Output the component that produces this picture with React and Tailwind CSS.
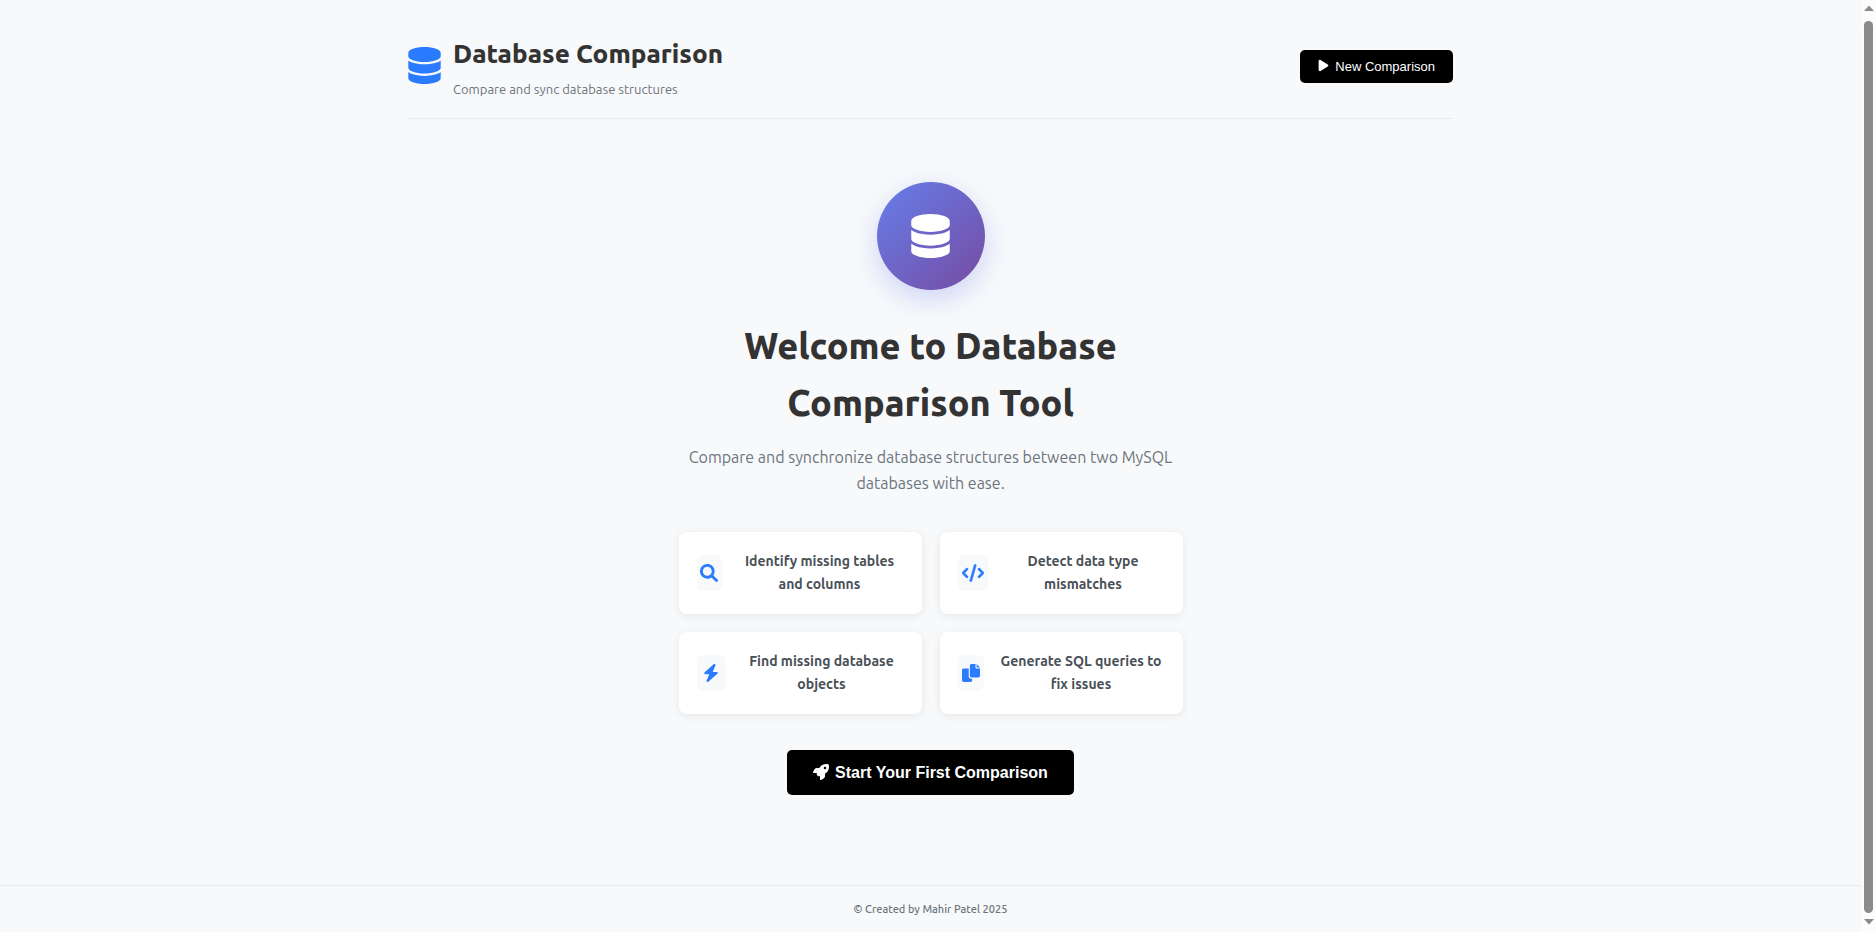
import React from "react";
import { FaDatabase, FaPlay, FaRocket } from "react-icons/fa6";

function BoltIcon({ className }) {
  return (
    <svg viewBox="0 0 384 512" fill="currentColor" aria-hidden="true" className={className}>
      <path d="M240.5 224H352C365.3 224 377.3 232.3 381.1 244.7C386.6 257.2 383.1 271.3 373.1 280.1L117.1 504.1C105.8 513.9 89.27 514.7 77.19 505.9C65.1 497.1 60.7 481.1 66.59 467.4L143.5 288H31.1C18.67 288 6.733 279.7 2.044 267.3C-2.645 254.8 .8944 240.7 10.93 231.9L266.9 7.918C278.2-1.92 294.7-2.669 306.8 6.114C318.9 14.9 323.3 30.87 317.4 44.61L240.5 224z" />
    </svg>
  );
}

function SearchIcon({ className }) {
  return (
    <svg viewBox="0 0 512 512" fill="currentColor" aria-hidden="true" className={className}>
      <path d="M500.3 443.7l-119.7-119.7c27.22-40.41 40.65-90.9 33.46-144.7C401.8 87.79 326.8 13.32 235.2 1.723C99.01-15.51-15.51 99.01 1.724 235.2c11.6 91.64 86.08 166.7 177.6 178.9c53.8 7.189 104.3-6.236 144.7-33.46l119.7 119.7c15.62 15.62 40.95 15.62 56.57 0C515.9 484.7 515.9 459.3 500.3 443.7zM79.1 208c0-70.58 57.42-128 128-128s128 57.42 128 128c0 70.58-57.42 128-128 128S79.1 278.6 79.1 208z" />
    </svg>
  );
}

function CodeIcon({ className }) {
  return (
    <svg viewBox="0 0 640 512" fill="currentColor" stroke="currentColor" strokeWidth="14" aria-hidden="true" className={className}>
      <path d="M414.8 40.79L286.8 488.8C281.9 505.8 264.2 515.6 247.2 510.8C230.2 505.9 220.4 488.2 225.2 471.2L353.2 23.21C358.1 6.216 375.8-3.624 392.8 1.232C409.8 6.087 419.6 23.8 414.8 40.79zM518.6 121.4L630.6 233.4C643.1 245.9 643.1 266.1 630.6 278.6L518.6 390.6C506.1 403.1 485.9 403.1 473.4 390.6C460.9 378.1 460.9 357.9 473.4 345.4L562.7 256L473.4 166.6C460.9 154.1 460.9 133.9 473.4 121.4C485.9 108.9 506.1 108.9 518.6 121.4zM166.6 166.6L77.25 256L166.6 345.4C179.1 357.9 179.1 378.1 166.6 390.6C154.1 403.1 133.9 403.1 121.4 390.6L9.372 278.6C-3.124 266.1-3.124 245.9 9.372 233.4L121.4 121.4C133.9 108.9 154.1 108.9 166.6 121.4C179.1 133.9 179.1 154.1 166.6 166.6z" />
    </svg>
  );
}

function CopyIcon({ className }) {
  return (
    <svg viewBox="0 0 512 512" fill="currentColor" aria-hidden="true" className={className}>
      <path d="M384 96L384 0h-112c-26.51 0-48 21.49-48 48v288c0 26.51 21.49 48 48 48H464c26.51 0 48-21.49 48-48V128h-95.1C398.4 128 384 113.6 384 96zM416 0v96h96L416 0zM192 352V128h-144c-26.51 0-48 21.49-48 48v288c0 26.51 21.49 48 48 48h192c26.51 0 48-21.49 48-48L288 416h-32C220.7 416 192 387.3 192 352z" />
    </svg>
  );
}

const features = [
  { Icon: SearchIcon, text: "Identify missing tables and columns", tile: "w-[25px]", icon: "h-[18px] w-[18px]", label: "max-w-40" },
  { Icon: CodeIcon, text: "Detect data type mismatches", tile: "w-[30px]", icon: "h-[18px] w-[22px]", label: "max-w-32" },
  { Icon: BoltIcon, text: "Find missing database objects", tile: "w-[29px]", icon: "h-[18px] w-[14px]", label: "max-w-40" },
  { Icon: CopyIcon, text: "Generate SQL queries to fix issues", tile: "w-[26px]", icon: "h-[18px] w-[18px]", label: "max-w-44" },
];

function FeatureCard({ Icon, text, tile, icon, label }) {
  return (
    <li className="flex items-center gap-3.5 rounded-lg bg-white p-[18px] shadow-[0_2px_9px_rgba(0,0,0,0.08)]">
      <span className={"flex h-9 shrink-0 items-center justify-center rounded-md bg-[#f8f9fb] text-[#2a7bff] " + tile}>
        <Icon className={icon} />
      </span>
      <span className="flex flex-1 justify-center">
        <span className={"text-center text-sm leading-[23px] font-semibold text-[#495057] " + label}>{text}</span>
      </span>
    </li>
  );
}

export default function App() {
  return (
    <div className="flex h-screen bg-[#f8f9fb] font-['Ubuntu','Noto_Sans',sans-serif] text-[#333]">
      <div className="flex min-w-0 flex-1 flex-col overflow-hidden">
        <div className="mx-auto w-full max-w-[1081px] flex-1 px-[18px]">
          <header className="flex items-start justify-between border-b border-[#e9ecef] pt-9 pb-[19px]">
            <div className="flex items-start gap-3">
              <FaDatabase className="mt-[11px] h-[37px] w-[33px] text-[#2a7bff]" />
              <div className="flex flex-col gap-[7px]">
                <h1 className="text-[26px] leading-9 font-extrabold">Database Comparison</h1>
                <p className="text-[13px] leading-5 font-[450] text-[#6c757d]">Compare and sync database structures</p>
              </div>
            </div>
            <button type="button" className="mt-3.5 flex h-[33px] items-center gap-1.5 rounded-[5px] bg-black px-[18px] font-['Liberation_Sans',sans-serif] text-[13px] text-white">
              <FaPlay className="mb-[3px] h-[13px] w-[11px]" />
              New Comparison
            </button>
          </header>

          <main className="mx-auto flex max-w-[504px] flex-col items-center pt-[63px] text-center">
            <div className="flex h-[108px] w-[108px] items-center justify-center rounded-full bg-[linear-gradient(135deg,#667eea_0%,#764ba2_100%)] shadow-[0_9px_27px_rgba(102,126,234,0.3)]">
              <FaDatabase className="h-11 w-[39px] text-white" />
            </div>
            <h2 className="mt-[27px] max-w-[420px] text-4xl leading-[57px] font-extrabold">Welcome to Database Comparison Tool</h2>
            <p className="mt-[13px] text-base leading-[26px] font-[450] text-[#6c757d]">
              Compare and synchronize database structures between two MySQL databases with ease.
            </p>
            <ul className="mt-9 grid w-full grid-cols-2 gap-[18px]">
              {features.map((f) => (
                <FeatureCard key={f.text} {...f} />
              ))}
            </ul>
            <button type="button" className="mt-9 flex h-[45px] items-center gap-1.5 rounded-[5px] bg-black px-[26px] font-['Liberation_Sans',sans-serif] text-base font-bold text-white">
              <FaRocket className="mb-0.5 h-4 w-4" />
              Start Your First Comparison
            </button>
          </main>
        </div>

        <footer className="border-t border-[#e9ecef] pt-[13px] pb-[13px] text-center text-[11px] leading-5 font-medium text-[#6c757d]">
          © Created by Mahir Patel 2025
        </footer>
      </div>

      <div aria-hidden="true" className="flex w-[15px] shrink-0 flex-col items-center bg-[#fcfcfc] pt-[5px] pb-[7px] text-[#8b8b8b]">
        <svg viewBox="0 0 10 6" className="h-1.5 w-2.5" fill="currentColor"><path d="M5 0.5L10 6H0z" /></svg>
        <div className="mt-2.5 mb-1.5 w-[9px] flex-1 rounded-full bg-[#8b8b8b]" />
        <svg viewBox="0 0 10 6" className="h-1.5 w-2.5" fill="currentColor"><path d="M0 0h10L5 5.5z" /></svg>
      </div>
    </div>
  );
}
